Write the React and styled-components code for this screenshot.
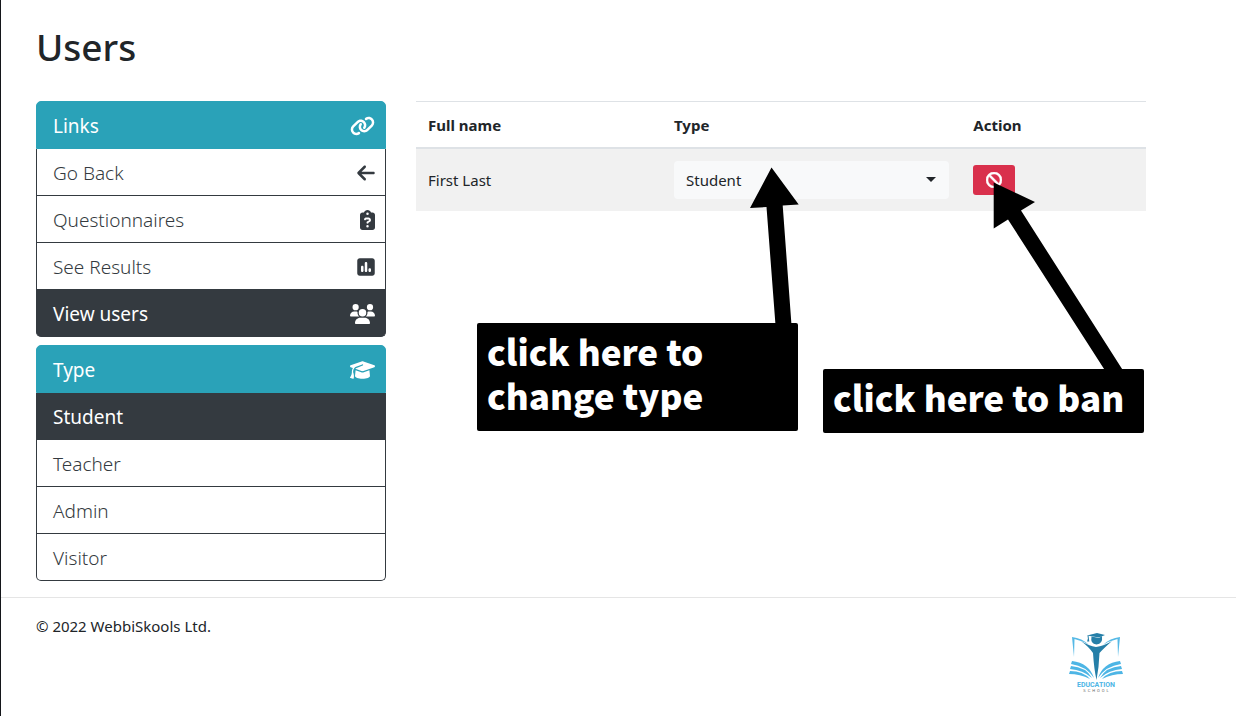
import React from "react";
import styled, { createGlobalStyle } from "styled-components";
import {
  FaLink,
  FaArrowLeft,
  FaClipboardQuestion,
  FaSquarePollVertical,
  FaUsers,
  FaGraduationCap,
  FaBan,
} from "react-icons/fa6";

const GlobalStyle = createGlobalStyle`
  *, *::before, *::after { box-sizing: border-box; }
  body {
    margin: 0;
    background: #fff;
    color: #212529;
    font-family: "Noto Sans", "Open Sans", sans-serif;
    font-size: 15px;
    line-height: 24px;
  }
`;

const Page = styled.div`
  min-height: 100vh;
  border-left: 1px solid #14161a;
`;

const Container = styled.div`
  max-width: 1145px;
  padding-left: 35px;
`;

const Title = styled.h1`
  margin: 0;
  padding: 23px 0 30px;
  font-size: 37px;
  line-height: 48px;
  font-weight: 500;
`;

const Columns = styled.div`
  display: grid;
  grid-template-columns: minmax(0, 350fr) minmax(0, 730fr);
  gap: 30px;
  align-items: start;
`;

const Sidebar = styled.nav`
  display: flex;
  flex-direction: column;
  gap: 8px;
`;

const ListGroup = styled.div`
  font-size: 19px;
  line-height: 30px;
`;

const itemColors = {
  header: "background: #2aa2b8; color: #fff; border-color: #2aa2b8;",
  active: "background: #343a40; color: #fff;",
  plain: "background: #fff; color: #343a40; font-weight: 350;",
};

const Item = styled.a`
  display: flex;
  align-items: center;
  justify-content: space-between;
  padding: 9px 10px 7px 16px;
  border: 1px solid #343a40;
  border-top-width: 0;
  text-decoration: none;
  ${({ $kind }) => itemColors[$kind]}
  &:first-child {
    border-top-width: 1px;
    border-radius: 5px 5px 0 0;
  }
  &:last-child { border-radius: 0 0 5px 5px; }
`;

const ItemIcon = styled.span`
  display: flex;
  svg {
    width: ${({ $width }) => $width}px;
    height: 20px;
  }
`;

const Main = styled.main`
  position: relative;
`;

const Table = styled.table`
  width: 100%;
  table-layout: fixed;
  border-collapse: collapse;
  border-top: 1px solid #dee2e6;
`;

const HeadCell = styled.th`
  width: ${({ $width }) => $width};
  padding: 11px 12px 10px;
  border-bottom: 2px solid #dee2e6;
  text-align: left;
  font-weight: 700;
`;

const Cell = styled.td`
  padding: 12px;
  background: #f1f1f1;
  vertical-align: middle;
`;

const SelectWrap = styled.div`
  position: relative;
  svg {
    position: absolute;
    right: 13px;
    top: 16px;
    pointer-events: none;
  }
`;

const Select = styled.select`
  display: block;
  appearance: none;
  width: 100%;
  height: 38px;
  padding: 0 12px;
  border: 0;
  border-radius: 4px;
  background: #f8f9fa;
  color: #212529;
  font: inherit;
`;

const BanButton = styled.button`
  display: flex;
  align-items: center;
  justify-content: center;
  width: 42px;
  height: 30px;
  padding: 0;
  border: 0;
  border-radius: 3px;
  background: #d9304c;
  color: #fff;
  font-size: 16px;
  svg {
    stroke: #fff;
    stroke-width: 16px;
  }
`;

const Arrows = styled.svg`
  position: absolute;
  left: 0;
  top: 0;
  overflow: visible;
  pointer-events: none;
`;

const Callout = styled.div`
  position: absolute;
  left: ${({ $left }) => $left}px;
  top: ${({ $top }) => $top}px;
  width: 321px;
  padding: 6px 10px 14px;
  border-radius: 2px;
  background: #000;
  color: #fff;
  font-family: "Noto Sans CJK SC", sans-serif;
  font-size: 35px;
  line-height: 44px;
  font-weight: 900;
`;

const Divider = styled.hr`
  margin: 16px 22px 16px 0;
  border: 0;
  border-top: 1px solid #e5e5e5;
`;

const FooterRow = styled.footer`
  display: flex;
  justify-content: space-between;
  align-items: flex-start;
`;

const Copyright = styled.p`
  margin: 0;
`;

const Logo = styled.svg`
  margin: 18px 22px 0 0;
`;

const links = [
  { label: "Links", kind: "header", Icon: FaLink, iconWidth: 25 },
  { label: "Go Back", kind: "plain", Icon: FaArrowLeft, iconWidth: 18 },
  { label: "Questionnaires", kind: "plain", Icon: FaClipboardQuestion, iconWidth: 15 },
  { label: "See Results", kind: "plain", Icon: FaSquarePollVertical, iconWidth: 18 },
  { label: "View users", kind: "active", Icon: FaUsers, iconWidth: 25 },
];

const types = [
  { label: "Type", kind: "header", Icon: FaGraduationCap, iconWidth: 25 },
  { label: "Student", kind: "active" },
  { label: "Teacher", kind: "plain" },
  { label: "Admin", kind: "plain" },
  { label: "Visitor", kind: "plain" },
];

function Menu({ items }) {
  return (
    <ListGroup>
      {items.map(({ label, kind, Icon, iconWidth }) => (
        <Item
          key={label}
          $kind={kind}
          as={kind === "header" ? "div" : "a"}
          href={kind === "header" ? undefined : "#"}
        >
          {label}
          {Icon && (
            <ItemIcon $width={iconWidth}>
              <Icon aria-hidden="true" />
            </ItemIcon>
          )}
        </Item>
      ))}
    </ListGroup>
  );
}

function SchoolLogo() {
  return (
    <Logo width="56" height="64" viewBox="0 0 56 64" role="img" aria-label="Education School">
      <g fill="#55b9e6">
        <path d="M21 13 Q14 6 4 5 L6 25 L6.500 7 Q15 9 21 13Z" />
        <path d="M35 13 Q42 6 52 5 L50 25 L49.500 7 Q41 9 35 13Z" />
      </g>
      <g fill="#4db5e5">
        <path d="M4 29 Q21 31 26 46 Q18 34 3 32Z" />
        <path d="M3 34 Q18 35 24 46 Q15 38 2 37Z" />
        <path d="M2 39 Q15 39 22 47 Q12 42 1 42Z" />
        <path d="M52 29 Q35 31 30 46 Q38 34 53 32Z" />
        <path d="M53 34 Q38 35 32 46 Q41 38 54 37Z" />
        <path d="M54 39 Q41 39 34 47 Q44 42 55 42Z" />
      </g>
      <g fill="#257fa8">
        <path d="M19 3.500 L29 1 L37 3 L31 5.500 Z" />
        <path d="M19.500 3.500 h1 l.8 6 h-2.200 l.8-3z" />
        <path d="M23.500 4.500 L31 6 L34 4 Q35 12 28.500 12.500 Q22 12 23.500 4.500Z" />
        <path d="M13 9 Q21 14 28 15 Q36 14 44 9 Q35 17 31.500 21 Q31 35 28.500 48 Q26 37 25 21 Q21 15 13 9Z" />
      </g>
      <text x="28" y="55" textAnchor="middle" fontFamily="Roboto, sans-serif" fontSize="7" fontWeight="700" fill="#4db5e5">
        EDUCATION
      </text>
      <text x="29" y="60" textAnchor="middle" fontFamily="Roboto, sans-serif" fontSize="4" letterSpacing="2" fill="#666">
        SCHOOL
      </text>
    </Logo>
  );
}

export default function App() {
  return (
    <Page>
      <GlobalStyle />
      <Container>
        <Title>Users</Title>
        <Columns>
          <Sidebar>
            <Menu items={links} />
            <Menu items={types} />
          </Sidebar>
          <Main>
            <Table>
              <thead>
                <tr>
                  <HeadCell $width="33.7%">Full name</HeadCell>
                  <HeadCell $width="41%">Type</HeadCell>
                  <HeadCell>Action</HeadCell>
                </tr>
              </thead>
              <tbody>
                <tr>
                  <Cell>First Last</Cell>
                  <Cell>
                    <SelectWrap>
                      <Select aria-label="Type" defaultValue="Student">
                        <option>Student</option>
                        <option>Teacher</option>
                        <option>Admin</option>
                        <option>Visitor</option>
                      </Select>
                      <svg width="10" height="5" viewBox="0 0 10 5" aria-hidden="true">
                        <path d="M0 0H10L5 5Z" fill="#212529" />
                      </svg>
                    </SelectWrap>
                  </Cell>
                  <Cell>
                    <BanButton aria-label="Ban user">
                      <FaBan aria-hidden="true" />
                    </BanButton>
                  </Cell>
                </tr>
              </tbody>
            </Table>
            <Arrows width="730" height="340" viewBox="0 0 730 340" aria-hidden="true">
              <path d="M355.500 66.500 L382.700 103.500 L366.700 104.500 L375.500 224 H359.500 L350.500 106 L334 107Z" />
              <path d="M577.700 81.500 L619 101 L605 109.500 L708 271 H690 L592 118.500 L577.700 127.500Z" />
            </Arrows>
            <Callout $left={61} $top={222}>
              click here to
              <br />
              change type
            </Callout>
            <Callout $left={407} $top={268}>click here to ban</Callout>
          </Main>
        </Columns>
      </Container>
      <Divider />
      <Container>
        <FooterRow>
          <Copyright>© 2022 WebbiSkools Ltd.</Copyright>
          <SchoolLogo />
        </FooterRow>
      </Container>
    </Page>
  );
}
